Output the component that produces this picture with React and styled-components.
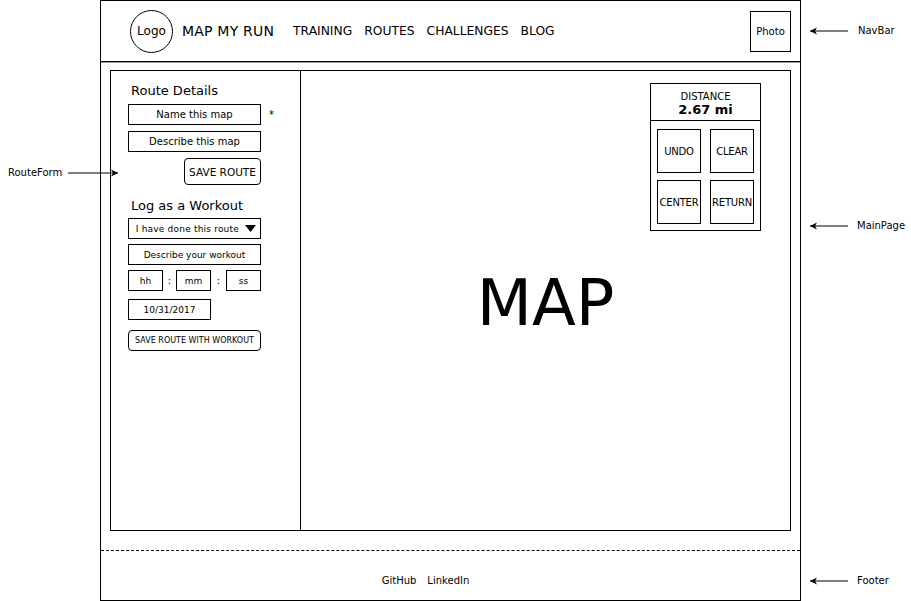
import React from 'react'
import styled, { createGlobalStyle } from 'styled-components'

const GlobalStyle = createGlobalStyle`
  html, body {
    margin: 0;
    padding: 0;
    background: #fff;
  }
  body {
    font-family: "DejaVu Sans", Verdana, sans-serif;
    color: #000;
  }
  * {
    box-sizing: border-box;
  }
`

const Page = styled.div`
  position: relative;
  width: 911px;
  height: 601px;
  overflow: hidden;
`

const Frame = styled.div`
  margin-left: 100px;
  width: 701px;
  height: 601px;
  border: 1px solid #000;
  display: flex;
  flex-direction: column;
`

const NavBar = styled.header`
  height: 61px;
  flex: none;
  border-bottom: 1px solid #000;
  box-shadow: 0 1px 0 #999;
  display: flex;
  align-items: center;
  padding: 0 9px 0 29px;
`

const Logo = styled.div`
  width: 43px;
  height: 43px;
  border: 1px solid #000;
  border-radius: 50%;
  display: flex;
  align-items: center;
  justify-content: center;
  font-size: 12px;
`

const Brand = styled.div`
  margin-left: 9px;
  font-size: 14px;
  letter-spacing: 0.2px;
`

const NavLinks = styled.nav`
  display: flex;
  gap: 12px;
  margin-left: 19px;
  font-size: 12.3px;
`

const Photo = styled.div`
  margin-left: auto;
  width: 41px;
  height: 41px;
  border: 1px solid #000;
  display: flex;
  align-items: center;
  justify-content: center;
  font-size: 10px;
`

const MainPage = styled.main`
  flex: 1;
  padding: 8px 9px 19px 9px;
  display: flex;
`

const Board = styled.div`
  flex: 1;
  border: 1px solid #000;
  display: flex;
`

const Sidebar = styled.aside`
  width: 190px;
  flex: none;
  border-right: 1px solid #000;
  padding: 12px 0 0 17px;
  display: flex;
  flex-direction: column;
`

const Heading = styled.div`
  font-size: 13px;
  margin: ${({ $top }) => $top || 0}px 0 ${({ $bottom }) => $bottom ?? 6}px 3px;
`

const Row = styled.div`
  display: flex;
  align-items: center;
  margin-bottom: ${({ $gap }) => $gap ?? 6}px;
  justify-content: ${({ $end }) => ($end ? 'flex-end' : 'flex-start')};
  width: ${({ $end }) => ($end ? '133px' : 'auto')};
`

const Field = styled.div`
  width: ${({ $w }) => $w || 133}px;
  height: 21px;
  border: 1px solid #000;
  display: flex;
  align-items: center;
  justify-content: center;
  font-size: ${({ $size }) => $size || 10}px;
`

const Asterisk = styled.span`
  margin-left: 8px;
  font-size: 10px;
`

const Button = styled.div`
  height: ${({ $h }) => $h || 21}px;
  width: ${({ $w }) => $w}px;
  border: 1px solid #000;
  border-radius: 4px;
  display: flex;
  align-items: center;
  justify-content: center;
  font-size: ${({ $size }) => $size || 10.5}px;
`

const Select = styled(Field)`
  justify-content: flex-end;
  padding-right: 4px;
  gap: 6px;
  font-size: 9px;
  letter-spacing: 0.2px;
`

const Colon = styled.span`
  width: ${({ $w }) => $w}px;
  text-align: center;
  font-size: 10px;
`

const MapArea = styled.section`
  flex: 1;
  position: relative;
  display: flex;
  align-items: center;
  justify-content: center;
`

const MapLabel = styled.div`
  font-size: 64px;
  margin: 4px 0 0 0;
`

const DistancePanel = styled.div`
  position: absolute;
  top: 12px;
  right: 29px;
  width: 111px;
  height: 148px;
  border: 1px solid #000;
  display: flex;
  flex-direction: column;
`

const DistanceHead = styled.div`
  height: 37px;
  border-bottom: 1px solid #000;
  display: flex;
  flex-direction: column;
  align-items: center;
  justify-content: center;
  padding-top: 3px;
  font-size: 10px;
  line-height: 12px;
  strong {
    font-size: 13px;
    line-height: 14px;
  }
`

const Controls = styled.div`
  display: grid;
  grid-template-columns: 44px 44px;
  column-gap: 9px;
  row-gap: 7px;
  padding: 8px 0 0 6px;
`

const Control = styled.div`
  height: 44px;
  border: 1px solid #000;
  display: flex;
  align-items: center;
  justify-content: center;
  font-size: 10px;
  letter-spacing: -0.2px;
`

const Footer = styled.footer`
  height: 50px;
  flex: none;
  border-top: 1px dashed #000;
  display: flex;
  align-items: center;
  justify-content: center;
  gap: 11px;
  font-size: 10px;
  padding: 10px 50px 0 0;
`

const Note = styled.div`
  position: absolute;
  top: ${({ $y }) => $y}px;
  left: ${({ $x }) => $x}px;
  display: flex;
  align-items: center;
  gap: ${({ $gap }) => $gap ?? 8}px;
  font-size: 10px;
`

const Arrow = ({ dir = 'left', w = 30 }) => (
  <svg width={ w } height="8" viewBox={ `0 0 ${ w } 8` }>
    <line x1="0" y1="4" x2={ w } y2="4" stroke="#000" strokeWidth="1" />
    { dir === 'left'
      ? <polygon points="0,4 7,0.5 5,4 7,7.5" fill="#000" />
      : <polygon points={ `${ w },4 ${ w - 7 },0.5 ${ w - 5 },4 ${ w - 7 },7.5` } fill="#000" /> }
  </svg>
)

const Triangle = () => (
  <svg width="11" height="8" viewBox="0 0 11 8">
    <polygon points="0,0 11,0 5.5,7" fill="#000" />
  </svg>
)

export default function App() {
  return (
    <Page>
      <GlobalStyle />
      <Frame>
        <NavBar>
          <Logo>Logo</Logo>
          <Brand>MAP MY RUN</Brand>
          <NavLinks>
            <span>TRAINING</span>
            <span>ROUTES</span>
            <span>CHALLENGES</span>
            <span>BLOG</span>
          </NavLinks>
          <Photo>Photo</Photo>
        </NavBar>
        <MainPage>
          <Board>
            <Sidebar>
              <Heading>Route Details</Heading>
              <Row>
                <Field>Name this map</Field>
                <Asterisk>*</Asterisk>
              </Row>
              <Row>
                <Field>Describe this map</Field>
              </Row>
              <Row $end>
                <Button $w={ 77 } $h={ 27 }>SAVE ROUTE</Button>
              </Row>
              <Heading $top={ 7 } $bottom={ 5 }>Log as a Workout</Heading>
              <Row $gap={ 5 }>
                <Select>
                  <span>I have done this route</span>
                  <Triangle />
                </Select>
              </Row>
              <Row $gap={ 5 }>
                <Field $size={ 9 }>Describe your workout</Field>
              </Row>
              <Row $gap={ 8 }>
                <Field $w={ 35 } $size={ 9 }>hh</Field>
                <Colon $w={ 13 }>:</Colon>
                <Field $w={ 35 } $size={ 9 }>mm</Field>
                <Colon $w={ 15 }>:</Colon>
                <Field $w={ 35 } $size={ 9 }>ss</Field>
              </Row>
              <Row $gap={ 10 }>
                <Field $w={ 83 } $size={ 9 }>10/31/2017</Field>
              </Row>
              <Row>
                <Button $w={ 133 } $size={ 8 }>SAVE ROUTE WITH WORKOUT</Button>
              </Row>
            </Sidebar>
            <MapArea>
              <MapLabel>MAP</MapLabel>
              <DistancePanel>
                <DistanceHead>
                  <span>DISTANCE</span>
                  <strong>2.67 mi</strong>
                </DistanceHead>
                <Controls>
                  <Control>UNDO</Control>
                  <Control>CLEAR</Control>
                  <Control>CENTER</Control>
                  <Control>RETURN</Control>
                </Controls>
              </DistancePanel>
            </MapArea>
          </Board>
        </MainPage>
        <Footer>
          <span>GitHub</span>
          <span>LinkedIn</span>
        </Footer>
      </Frame>
      <Note $x={ 810 } $y={ 25 } $gap={ 10 }>
        <Arrow w={ 38 } />
        <span>NavBar</span>
      </Note>
      <Note $x={ 8 } $y={ 167 } $gap={ 6 }>
        <span>RouteForm</span>
        <Arrow dir="right" w={ 50 } />
      </Note>
      <Note $x={ 810 } $y={ 220 } $gap={ 9 }>
        <Arrow w={ 38 } />
        <span>MainPage</span>
      </Note>
      <Note $x={ 810 } $y={ 575 } $gap={ 9 }>
        <Arrow w={ 38 } />
        <span>Footer</span>
      </Note>
    </Page>
  )
}
